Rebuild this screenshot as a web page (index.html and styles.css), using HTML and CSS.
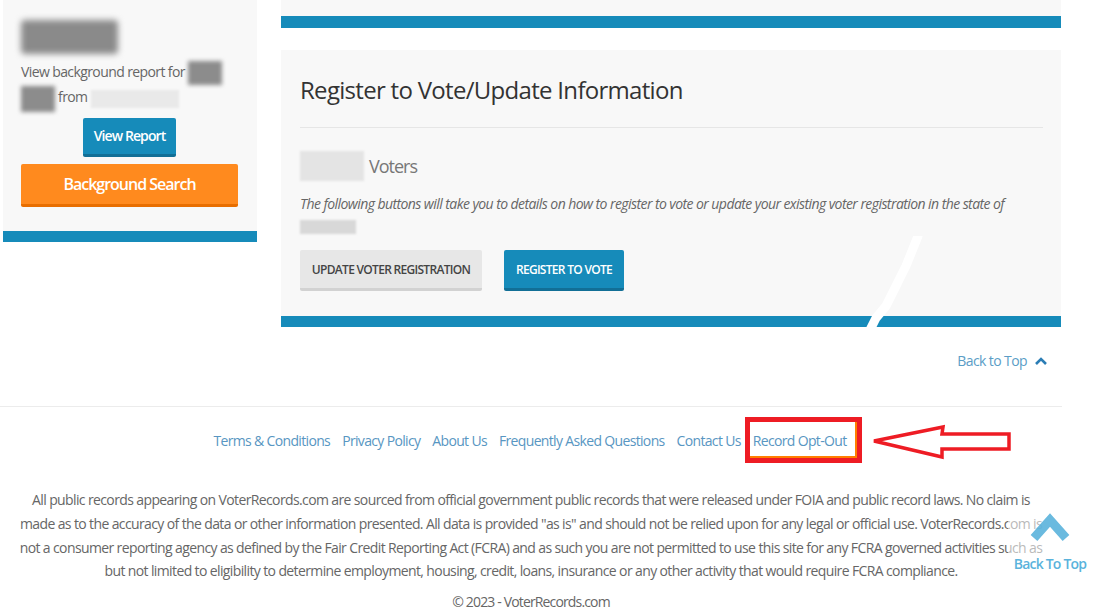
FILE: index.html
```html
<!DOCTYPE html>
<html>
<head>
<meta charset="utf-8">
<link rel="stylesheet" href="styles.css">
</head>
<body>
<div class="top">
  <aside class="side">
    <div class="name-blur"></div>
    <p class="side-text">View background report for <span class="blob blob-a"></span><br><span class="blob blob-b"></span> from <span class="blob blob-light"></span></p>
    <div class="side-btns">
      <a class="btn btn-blue btn-report">View Report</a>
      <a class="btn btn-orange">Background Search</a>
    </div>
  </aside>
  <main class="main">
    <div class="strip"></div>
    <section class="card">
      <h1 class="card-title">Register to Vote/Update Information</h1>
      <hr class="card-hr">
      <h2 class="state"><span class="blob blob-state"></span> Voters</h2>
      <p class="desc">The following buttons will take you to details on how to register to vote or update your existing voter registration in the state of <br><span class="blob blob-desc"></span></p>
      <div class="actions">
        <a class="btn btn-gray">UPDATE VOTER REGISTRATION</a>
        <a class="btn btn-blue btn-caps">REGISTER TO VOTE</a>
      </div>
    </section>
    <div class="back-row"><a class="back-link">Back to Top <svg class="chev" viewBox="0 0 12 8" width="12" height="8"><path d="M1 7 L6 2 L11 7" fill="none" stroke="#2b7db5" stroke-width="2.6"/></svg></a></div>
  </main>
</div>
<footer class="footer">
  <nav class="links">
    <a>Terms &amp; Conditions</a>
    <a>Privacy Policy</a>
    <a>About Us</a>
    <a>Frequently Asked Questions</a>
    <a>Contact Us</a>
    <a class="optout">Record Opt-Out<span class="red-box"></span></a>
  </nav>
  <p class="disclaimer">All public records appearing on VoterRecords.com are sourced from official government public records that were released under FOIA and public record laws. No claim is made as to the accuracy of the data or other information presented. All data is provided "as is" and should not be relied upon for any legal or official use. VoterRecords.com is not a consumer reporting agency as defined by the Fair Credit Reporting Act (FCRA) and as such you are not permitted to use this site for any FCRA governed activities such as but not limited to eligibility to determine employment, housing, credit, loans, insurance or any other activity that would require FCRA compliance.</p>
  <p class="copy">© 2023 - VoterRecords.com</p>
</footer>
<svg class="arrow" width="145" height="40" viewBox="0 0 145 40"><path d="M4 19 L73 5 L72 12 L139 12 L139 27 L72 27 L72 35 Z" fill="#fff" stroke="#ee1c24" stroke-width="3.5" stroke-linejoin="miter"/></svg>
<svg class="scratch" width="90" height="180" viewBox="0 0 90 180"><path d="M72 0 L60 30 L40 70 L30 82 L22 98 L16 112 L10 125 L4 150" fill="none" stroke="#fff" stroke-width="9" stroke-linecap="round"/></svg>
<a class="fixed-top"><svg viewBox="0 0 40 30" width="40" height="30"><path d="M4 26 L20 8 L36 26" fill="none" stroke="#5ab3dc" stroke-width="9"/></svg><span>Back To Top</span></a>
</body>
</html>
```
FILE: styles.css
```css
html, body { margin: 0; padding: 0; background: #fff; }
body {
  font-family: "Open Sans", "DejaVu Sans", sans-serif;
  font-stretch: 100%;
  color: #666;
  position: relative;
  width: 1094px;
  height: 614px;
  overflow: hidden;
}
a { text-decoration: none; cursor: pointer; }
.top { display: flex; gap: 24px; padding-left: 3px; }
.side {
  width: 254px; box-sizing: border-box; height: 242px;
  background: #f8f8f8; border-bottom: 11px solid #168bba;
  padding: 20px 19px 0 18px;
}
.name-blur {
  width: 97px; height: 34px; background: #8a8a8a; filter: blur(3px); border-radius: 4px;
}
.side-text { margin: 6px 0 0; font-size: 14px; letter-spacing: -0.6px; line-height: 23px; color: #666; }
.blob { display: inline-block; vertical-align: middle; filter: blur(2px); }
.blob-a { width: 34px; height: 24px; background: #8c8c8c; }
.blob-b { width: 34px; height: 26px; background: #8c8c8c; }
.blob-light { width: 88px; height: 18px; background: #e9e9e9; filter: blur(1px); }
.side-btns { display: flex; flex-direction: column; align-items: center; gap: 7px; margin-top: 6px; }
.btn { display: inline-flex; align-items: center; justify-content: center; box-sizing: border-box; border-radius: 2px; font-weight: 600; white-space: nowrap; }
.btn-blue { background: #168bba; color: #fff; border-bottom: 3px solid #126f96; }
.btn-report { width: 93px; height: 39px; font-size: 14px; letter-spacing: -0.9px; }
.btn-orange { width: 100%; height: 43px; background: #ff8a1e; color: #fff; font-size: 16px; letter-spacing: -1px; border-bottom: 3px solid #e86e00; }
.main { width: 780px; }
.strip { height: 16px; background: #f8f8f8; border-bottom: 12px solid #168bba; }
.card {
  margin-top: 22px; background: #f8f8f8; border-bottom: 11px solid #168bba;
  padding: 21px 18px 25px 19px;
}
.card-title { margin: 0; font-size: 24px; letter-spacing: -0.7px; line-height: 37px; font-weight: 400; color: #333; }
.card-hr { margin: 19px 0 0; border: 0; border-top: 1px solid #e6e6e6; }
.state { margin: 23px 0 0; font-size: 18px; letter-spacing: -1px; line-height: 26px; font-weight: 400; color: #777; display: flex; align-items: center; gap: 5px; }
.blob-state { width: 64px; height: 30px; background: #e4e4e4; filter: blur(1px); }
.desc { margin: 0; padding-top: 12px; font-size: 14px; letter-spacing: -0.57px; line-height: 22px; font-style: italic; color: #666; }
.blob-desc { width: 56px; height: 14px; background: #d8d8d8; filter: blur(1px); }
.actions { display: flex; gap: 22px; margin-top: 13px; }
.btn-gray { width: 182px; height: 41px; background: #e7e7e7; color: #444; font-size: 12px; letter-spacing: -0.7px; border-bottom: 3px solid #d2d2d2; }
.btn-caps { width: 120px; height: 41px; font-size: 12px; letter-spacing: -0.7px; }
.back-row { display: flex; justify-content: flex-end; padding: 22px 14px 0 0; }
.back-link { color: #5b9dc6; font-size: 14px; letter-spacing: -0.6px; line-height: 24px; display: flex; align-items: center; gap: 8px; }
.footer { margin-top: 33px; width: 1062px; border-top: 1px solid #ececec; }
.links { display: flex; justify-content: center; gap: 12px; padding: 22px 2px 0 0; font-size: 14px; letter-spacing: -0.66px; line-height: 24px; }
.links a { color: #5896c2; }
.optout { position: relative; }
.red-box {
  position: absolute; left: -8px; top: -12px; right: -15px; height: 46px; box-sizing: border-box;
  border: 5px solid #ee1c24; box-shadow: inset -2px -2px 0 #ff7f00;
}
.disclaimer { margin: 35px 0 0; padding: 0 16px; text-align: center; font-size: 14px; letter-spacing: -0.62px; line-height: 23.8px; color: #666; }
.copy { margin: 9px 0 0; text-align: center; font-size: 14px; letter-spacing: -0.85px; line-height: 20px; color: #666; }
.arrow { position: absolute; left: 870px; top: 422px; }
.scratch { position: absolute; left: 846px; top: 236px; }
.fixed-top {
  position: absolute; left: 1008px; top: 510px; box-sizing: border-box; padding: 2px 0 4px;
  display: flex; flex-direction: column; align-items: center; width: 84px;
  background: rgba(255,255,255,0.55);
  color: #5ab3dc; font-weight: 600; font-size: 14px; letter-spacing: -0.8px;
}
.fixed-top svg { opacity: 0.9; }
.fixed-top span { margin-top: 12px; }
```
